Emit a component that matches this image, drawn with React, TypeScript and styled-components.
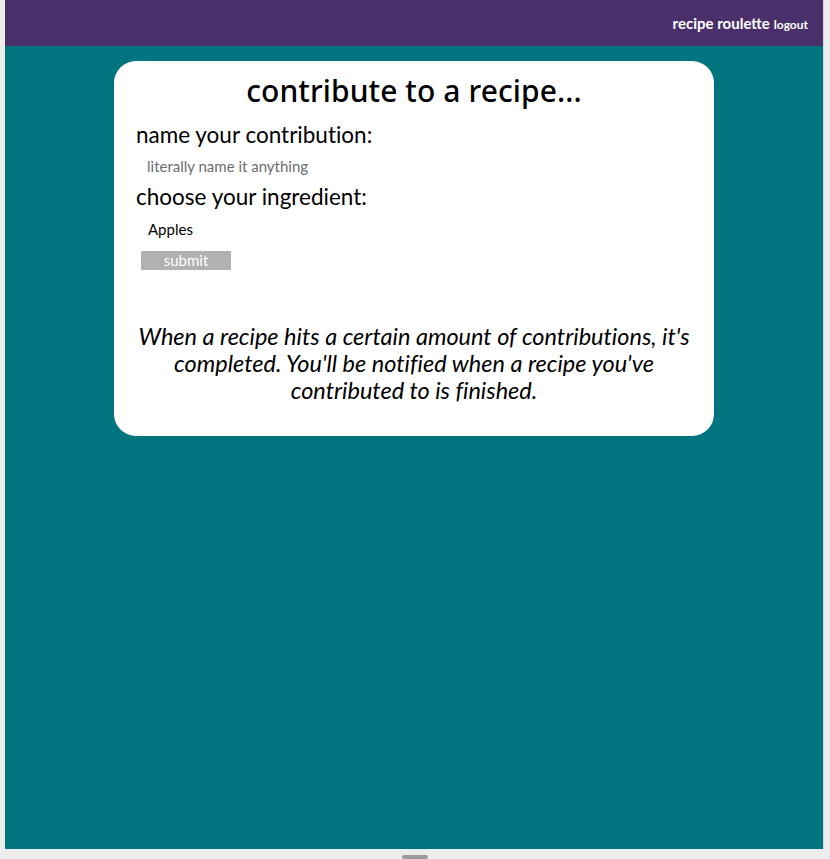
import React from 'react'
import styled, { createGlobalStyle } from 'styled-components'

const GlobalStyle = createGlobalStyle`
  html, body {
    margin: 0;
    padding: 0;
    background: #ededed;
  }
  body {
    font-family: Lato, "Liberation Sans", sans-serif;
  }
`;

const Frame = styled.div`
  width: 830px;
  height: 859px;
  display: flex;
  flex-direction: column;
  align-items: flex-start;
  overflow: hidden;
`;

const Page = styled.div`
  margin-left: 5px;
  width: 818px;
  height: 850px;
  background: #007580;
  display: flex;
  flex-direction: column;
  border-right: 1px solid #d8d8d8;
`;

const Header = styled.header`
  height: 46px;
  background: #4a306b;
  display: flex;
  align-items: center;
  justify-content: flex-end;
  padding-right: 15px;
  color: #fff;
`;

const Brand = styled.span`
  font-size: 15px;
  font-weight: 700;
  margin-right: 4px;
`;

const Logout = styled.span`
  font-size: 12px;
  font-weight: 700;
  margin-top: 2px;
`;

const Card = styled.main`
  width: 600px;
  margin: 15px 0 0 109px;
  background: #fff;
  border-radius: 22px;
  padding: 10px 22px 30px;
  box-sizing: border-box;
  height: 375px;
  display: flex;
  flex-direction: column;
`;

const Title = styled.h1`
  margin: 0;
  text-align: center;
  font-family: "Noto Sans", Inter, sans-serif;
  font-weight: 500;
  font-size: 30px;
  line-height: 40px;
  color: #000;
  letter-spacing: 0.1px;
`;

const Label = styled.div<{ $top: number }>`
  font-size: 22.5px;
  line-height: 28px;
  color: #000;
  font-variant-ligatures: no-common-ligatures;
  margin-top: ${({ $top }) => $top}px;
`;

const TextInput = styled.input`
  border: none;
  outline: none;
  font-family: Lato, sans-serif;
  font-size: 15px;
  padding: 0;
  margin: 7px 0 0 11px;
  height: 20px;
  width: 300px;
  &::placeholder {
    color: #6d6d6d;
  }
`;

const Choice = styled.div`
  font-size: 15px;
  color: #000;
  margin: 8px 0 0 12px;
  line-height: 20px;
`;

const Submit = styled.button`
  margin: 12px 0 0 5px;
  width: 90px;
  height: 19px;
  border: none;
  background: #b1b1b1;
  color: #fff;
  font-family: Lato, sans-serif;
  font-size: 15px;
  padding: 0;
  line-height: 19px;
`;

const Note = styled.p`
  margin: 53px 0 0;
  font-style: italic;
  font-size: 23.5px;
  line-height: 27px;
  text-align: center;
  color: #000;
  font-variant-ligatures: no-common-ligatures;
`;

const Handle = styled.div`
  margin: 6px 0 0 402px;
  width: 26px;
  height: 4px;
  border-radius: 2px;
  background: #9a9a9a;
`;

export default function App() {
  return (
    <>
      <GlobalStyle />
      <Frame>
        <Page>
          <Header>
            <Brand>recipe roulette</Brand>
            <Logout>logout</Logout>
          </Header>
          <Card>
            <Title>contribute to a recipe...</Title>
            <Label $top={10}>name your contribution:</Label>
            <TextInput placeholder="literally name it anything" />
            <Label $top={7}>choose your ingredient:</Label>
            <Choice>Apples</Choice>
            <div>
              <Submit>submit</Submit>
            </div>
            <Note>
              When a recipe hits a certain amount of contributions, it's completed. You'll be
              notified when a recipe you've contributed to is finished.
            </Note>
          </Card>
        </Page>
        <Handle />
      </Frame>
    </>
  )
}
